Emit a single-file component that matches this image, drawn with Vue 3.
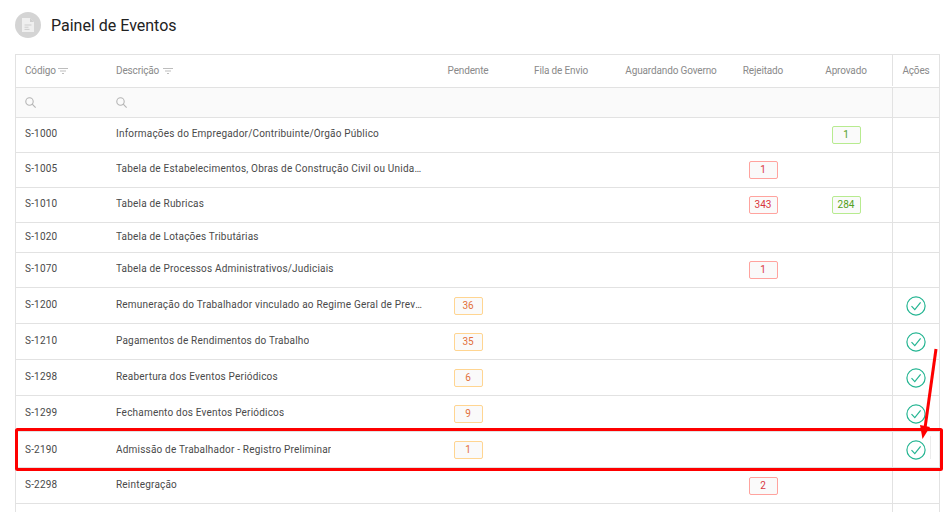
<script setup>
const rows = [
  { code: 'S-1000', desc: 'Informações do Empregador/Contribuinte/Órgão Público', h: 35, ap: '1' },
  { code: 'S-1005', desc: 'Tabela de Estabelecimentos, Obras de Construção Civil ou Unidades de Órgãos Públicos', h: 35, rej: '1' },
  { code: 'S-1010', desc: 'Tabela de Rubricas', h: 35, rej: '343', ap: '284' },
  { code: 'S-1020', desc: 'Tabela de Lotações Tributárias', h: 30 },
  { code: 'S-1070', desc: 'Tabela de Processos Administrativos/Judiciais', h: 35, rej: '1' },
  { code: 'S-1200', desc: 'Remuneração do Trabalhador vinculado ao Regime Geral de Previdência Social', h: 36, pen: '36', ok: true },
  { code: 'S-1210', desc: 'Pagamentos de Rendimentos do Trabalho', h: 36, pen: '35', ok: true },
  { code: 'S-1298', desc: 'Reabertura dos Eventos Periódicos', h: 36, pen: '6', ok: true },
  { code: 'S-1299', desc: 'Fechamento dos Eventos Periódicos', h: 36, pen: '9', ok: true },
  { code: 'S-2190', desc: 'Admissão de Trabalhador - Registro Preliminar', h: 36, pen: '1', ok: true, flat: true },
  { code: 'S-2298', desc: 'Reintegração', h: 36, rej: '2' },
  { code: '', desc: '', h: 36 }
]
</script>

<template>
  <div class="page">
    <header class="title">
      <span class="title-icon">
        <svg width="12" height="14" viewBox="0 0 12 14">
          <path d="M0 0h8l4 4v10H0z" fill="#efefef" />
          <path d="M8 0v4h4z" fill="#cfcfcf" />
          <path d="M2.5 7h7M2.5 9.2h4M2.5 11.4h5" stroke="#cdcdcd" />
        </svg>
      </span>
      <h1>Painel de Eventos</h1>
    </header>

    <div class="table">
      <div class="row head">
        <div class="c code">Código
          <svg class="funnel tight" width="10" height="6" viewBox="0 0 10 6"><path d="M0 .5h10M2 3h6M4 5.5h2" stroke="#bdbdbd" /></svg>
        </div>
        <div class="c desc">Descrição
          <svg class="funnel" width="10" height="6" viewBox="0 0 10 6"><path d="M0 .5h10M2 3h6M4 5.5h2" stroke="#bdbdbd" /></svg>
        </div>
        <div class="c pen">Pendente</div>
        <div class="c fila">Fila de Envio</div>
        <div class="c gov">Aguardando Governo</div>
        <div class="c rej">Rejeitado</div>
        <div class="c apr">Aprovado</div>
        <div class="c act">Ações</div>
      </div>
      <div class="row search">
        <div class="c code">
          <svg width="11" height="11" viewBox="0 0 11 11" fill="none" stroke="#b4b4b4" stroke-width="1.1"><circle cx="4.5" cy="4.5" r="3.7" /><path d="M7.2 7.2 10.6 10.6" /></svg>
        </div>
        <div class="c desc">
          <svg width="11" height="11" viewBox="0 0 11 11" fill="none" stroke="#b4b4b4" stroke-width="1.1"><circle cx="4.5" cy="4.5" r="3.7" /><path d="M7.2 7.2 10.6 10.6" /></svg>
        </div>
        <div class="c pen"></div><div class="c fila"></div><div class="c gov"></div>
        <div class="c rej"></div><div class="c apr"></div><div class="c act"></div>
      </div>
      <div
        v-for="r in rows"
        :key="r.code"
        class="row body"
        :class="{ up: r.h === 35, flat: r.flat }"
        :style="{ height: r.h + 'px' }"
      >
        <div class="c code"><span class="lift">{{ r.code }}</span></div>
        <div class="c desc"><span class="clip lift">{{ r.desc }}</span></div>
        <div class="c pen"><span v-if="r.pen" class="tag orange">{{ r.pen }}</span></div>
        <div class="c fila"></div>
        <div class="c gov"></div>
        <div class="c rej"><span v-if="r.rej" class="tag red">{{ r.rej }}</span></div>
        <div class="c apr"><span v-if="r.ap" class="tag green">{{ r.ap }}</span></div>
        <div class="c act">
          <svg v-if="r.ok" width="20" height="20" viewBox="0 0 20 20" fill="none" stroke="#25b592" stroke-width="1.2"><circle cx="10" cy="10" r="9.1" /><path d="M5.5 10.2 8.8 13.6 14.6 6.4" /></svg>
        </div>
      </div>
    </div>

    <svg class="mark" width="950" height="512" viewBox="0 0 950 512" fill="none">
      <path d="M930.5 436v23" stroke="#ececec" />
      <rect x="16.5" y="429.5" width="925" height="40" rx="1" stroke="#fe0000" stroke-width="3" />
      <path d="M936 349 925 428" stroke="#fe0000" stroke-width="3" />
      <path d="M920 425 930 427 922.5 439z" fill="#fe0000" />
    </svg>
  </div>
</template>

<style>
html, body { margin: 0; overflow: hidden; background: #fff; }
</style>

<style scoped>
.page {
  position: relative;
  width: 950px;
  height: 512px;
  overflow: hidden;
  padding: 12px 10px 0 15px;
  box-sizing: border-box;
  font-family: Roboto, "Liberation Sans", sans-serif;
  color: #555;
}
.title {
  display: flex;
  align-items: center;
  gap: 10px;
  height: 26px;
  margin-bottom: 16px;
}
.title-icon {
  width: 26px;
  height: 26px;
  border-radius: 50%;
  background: #d4d4d4;
  display: flex;
  align-items: center;
  justify-content: center;
}
h1 {
  margin: 0;
  font-size: 16px;
  font-weight: 400;
  color: #222;
}
.table {
  width: 925px;
  box-sizing: border-box;
  border: 1px solid #e2e2e2;
  border-bottom: 0;
}
.row {
  display: grid;
  grid-template-columns: 90px 324px 76px 110px 110px 74px 92px 47px;
  box-sizing: border-box;
  border-bottom: 1px solid #e2e2e2;
  font-size: 10px;
  letter-spacing: 0.2px;
  color: #4a4a4a;
}
.head {
  height: 33px;
  color: #8a8a8a;
  letter-spacing: -0.15px;
  padding-bottom: 1px;
}
.search { height: 30px; background: #fafafa; }
.c {
  display: flex;
  align-items: center;
  justify-content: center;
  min-width: 0;
  white-space: nowrap;
}
.code, .desc { justify-content: flex-start; padding-left: 9px; }
.desc { padding-left: 10px; padding-right: 8px; }
.act { border-left: 1px solid #e2e2e2; }
.funnel { margin-left: 4px; }
.funnel.tight { margin-left: 2px; }
.lift { margin-bottom: 2px; }
.up .lift { margin-bottom: 4px; }
.flat .lift { margin-bottom: 0; }
.clip {
  display: block;
  overflow: hidden;
  text-overflow: ellipsis;
  white-space: nowrap;
}
.tag {
  display: block;
  box-sizing: border-box;
  width: 29px;
  height: 18px;
  line-height: 15px;
  text-align: center;
  border: 1px solid;
  border-radius: 2px;
  background: #fafafa;
  letter-spacing: 0;
}
.orange { border-color: #ffd591; color: #e2703a; }
.red { border-color: #ffa39e; color: #d9363e; }
.green { border-color: #b7eb8f; color: #52a020; }
.mark { position: absolute; left: 0; top: 0; pointer-events: none; }
</style>
